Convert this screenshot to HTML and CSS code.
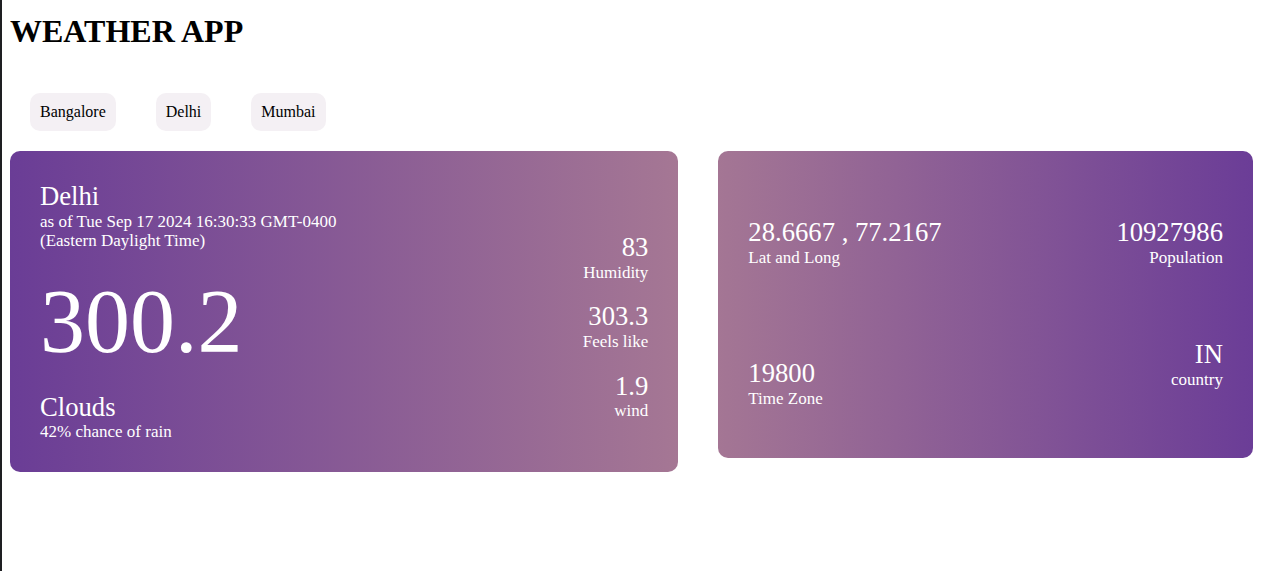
FILE: index.html
```html
<!DOCTYPE html>
<html lang="en">
<head>
<meta charset="utf-8">
<title>Weather App</title>
<link rel="stylesheet" href="styles.css">
</head>
<body>
  <h1 class="title">WEATHER APP</h1>
  <div class="cities">
    <button class="city">Bangalore</button>
    <button class="city">Delhi</button>
    <button class="city">Mumbai</button>
  </div>
  <div class="cards">
    <section class="card card-weather">
      <div class="main-col">
        <div class="head">
          <div class="big">Delhi</div>
          <div class="small">as of Tue Sep 17 2024 16:30:33 GMT-0400<br>(Eastern Daylight Time)</div>
        </div>
        <div class="temp">300.2</div>
        <div class="cond">
          <div class="big">Clouds</div>
          <div class="small">42% chance of rain</div>
        </div>
      </div>
      <div class="stats-col">
        <div class="stat"><div class="big">83</div><div class="small">Humidity</div></div>
        <div class="stat"><div class="big">303.3</div><div class="small">Feels like</div></div>
        <div class="stat"><div class="big">1.9</div><div class="small">wind</div></div>
      </div>
    </section>
    <section class="card card-info">
      <div class="info-col info-left">
        <div class="stat"><div class="big">28.6667 , 77.2167</div><div class="small">Lat and Long</div></div>
        <div class="stat"><div class="big">19800</div><div class="small">Time Zone</div></div>
      </div>
      <div class="info-col info-right">
        <div class="stat"><div class="big">10927986</div><div class="small">Population</div></div>
        <div class="stat"><div class="big">IN</div><div class="small">country</div></div>
      </div>
    </section>
  </div>
</body>
</html>
```
FILE: styles.css
```css
html {
  border-left: 2px solid #1e1f22;
  background: #ffffff;
  min-height: 100%;
}
body {
  margin: 8px;
  font-family: "Liberation Serif", "Times New Roman", serif;
  color: #000;
}
.title {
  margin: 5px 0 0;
  font-size: 32px;
  font-weight: bold;
  line-height: 36.8px;
}
.cities {
  margin-top: 43px;
  display: flex;
}
.city {
  font-family: "Liberation Serif", "Times New Roman", serif;
  font-size: 16px;
  line-height: 18.4px;
  padding: 10px;
  margin: 0 20px;
  border: none;
  border-radius: 10px;
  background: #f4f0f4;
  color: #000;
}
.cards {
  margin-top: 20px;
  display: grid;
  grid-template-columns: 5fr 4fr;
  gap: 40px;
  align-items: start;
}
.card {
  border-radius: 10px;
  color: #fff;
  padding: 30px;
  display: flex;
  justify-content: space-between;
  min-width: 0;
}
.card-weather {
  background: linear-gradient(to right, #6a3d96, #a57794);
}
.card-info {
  background: linear-gradient(to right, #a47694, #6b3d97);
}
.big {
  font-size: 26.67px;
  line-height: 30.7px;
}
.small {
  font-size: 17px;
  line-height: 19.55px;
}
.main-col {
  display: flex;
  flex-direction: column;
}
.temp {
  font-size: 90px;
  line-height: 103.5px;
  margin: 19px 0 18px;
}
.stats-col {
  display: flex;
  flex-direction: column;
  justify-content: flex-end;
  align-items: flex-end;
  text-align: right;
  gap: 19px;
  padding-bottom: 21px;
}
.info-col {
  display: flex;
  flex-direction: column;
  padding-top: 36px;
}
.info-left {
  gap: 91px;
  padding-bottom: 19px;
}
.info-right {
  gap: 72px;
  align-items: flex-end;
  text-align: right;
}
```
